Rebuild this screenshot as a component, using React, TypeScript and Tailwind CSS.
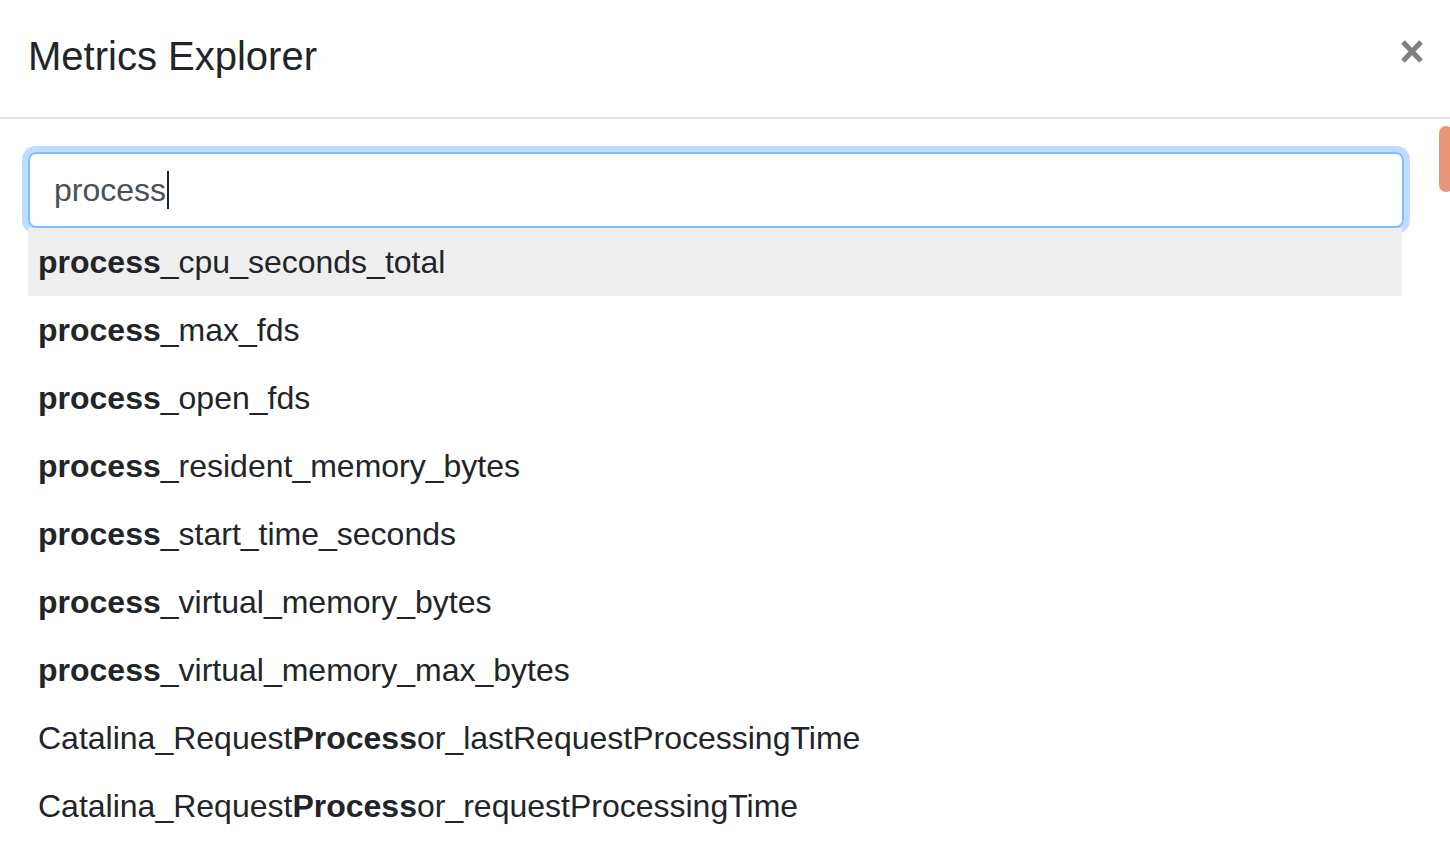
import React from 'react';

const metrics: { pre: string; hit: string; post: string }[] = [
  { pre: '', hit: 'process', post: '_cpu_seconds_total' },
  { pre: '', hit: 'process', post: '_max_fds' },
  { pre: '', hit: 'process', post: '_open_fds' },
  { pre: '', hit: 'process', post: '_resident_memory_bytes' },
  { pre: '', hit: 'process', post: '_start_time_seconds' },
  { pre: '', hit: 'process', post: '_virtual_memory_bytes' },
  { pre: '', hit: 'process', post: '_virtual_memory_max_bytes' },
  { pre: 'Catalina_Request', hit: 'Process', post: 'or_lastRequestProcessingTime' },
  { pre: 'Catalina_Request', hit: 'Process', post: 'or_requestProcessingTime' },
];

export default function App() {
  return (
    <div className="relative w-[1450px] h-[848px] overflow-hidden bg-white text-[#212529] font-['Liberation_Sans',Arial,sans-serif]">
      {/* header */}
      <div className="flex items-center justify-between h-[119px] border-b-2 border-[#dee2e6] pl-[28px] pr-[26px]">
        <h5 className="text-[40px] leading-[60px] font-normal -mt-[6px]">Metrics Explorer</h5>
        <button className="-mt-[14px] text-[#808080]" aria-label="Close">
          <svg width="24" height="25" viewBox="0 0 24 25">
            <path d="M3 3 L21 22 M21 3 L3 22" stroke="currentColor" strokeWidth="5" strokeLinecap="butt" />
          </svg>
        </button>
      </div>

      {/* body */}
      <div className="pt-[33px] pl-[28px] pr-[46px]">
        <div className="h-[76px] rounded-[8px] border-2 border-[#80bdff] shadow-[0_0_0_6px_rgba(0,123,255,0.25)] flex items-center pl-[24px] text-[32px] text-[#495057]">
          <span>process</span>
          <span className="w-[2px] h-[38px] bg-[#212529] ml-[1px]" />
        </div>
        <ul className="mr-[2px]">
          {metrics.map((m, i) => (
            <li
              key={i}
              className={`h-[68px] flex items-center pl-[10px] text-[32px] ${i === 0 ? 'bg-[#efefef]' : ''}`}
            >
              {m.pre}
              <strong className="font-bold">{m.hit}</strong>
              {m.post}
            </li>
          ))}
        </ul>
      </div>

      {/* scrollbar thumb */}
      <div className="absolute top-[126px] left-[1439px] w-[14px] h-[66px] rounded-full bg-[#e8967a]" />
    </div>
  );
}
